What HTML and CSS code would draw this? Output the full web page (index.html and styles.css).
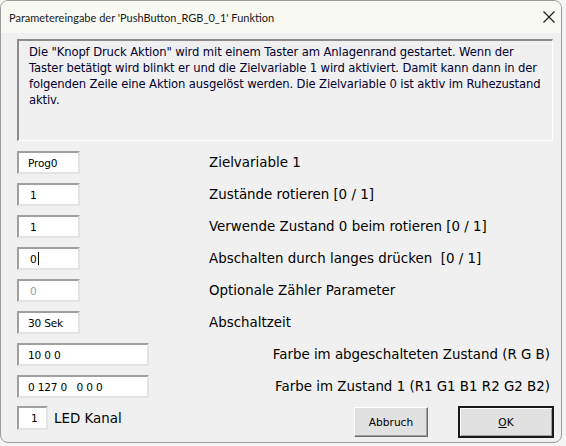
FILE: index.html
```html
<!DOCTYPE html>
<html lang="de">
<head>
<meta charset="utf-8">
<title>Parametereingabe</title>
<link rel="stylesheet" href="styles.css">
</head>
<body>
<div class="window">
  <div class="titlebar">
    <span class="title">Parametereingabe der 'PushButton_RGB_0_1' Funktion</span>
    <svg class="close" width="12" height="12" viewBox="0 0 12 12"><path d="M0.5 0.5 L11.5 11.5 M11.5 0.5 L0.5 11.5" stroke="#1b1b1b" stroke-width="1.1" fill="none"/></svg>
  </div>
  <div class="content">
    <div class="desc">Die "Knopf Druck Aktion" wird mit einem Taster am Anlagenrand gestartet. Wenn der Taster betätigt wird blinkt er und die Zielvariable 1 wird aktiviert. Damit kann dann in der folgenden Zeile eine Aktion ausgelöst werden. Die Zielvariable 0 ist aktiv im Ruhezustand aktiv.</div>
    <div class="rows">
      <div class="row"><div class="field"><span class="val">Prog0</span></div><span class="label">Zielvariable 1</span></div>
      <div class="row"><div class="field"><span class="val v1">1</span></div><span class="label">Zustände rotieren [0 / 1]</span></div>
      <div class="row"><div class="field"><span class="val v1">1</span></div><span class="label">Verwende Zustand 0 beim rotieren [0 / 1]</span></div>
      <div class="row"><div class="field"><span class="val v1">0</span><span class="caret"></span></div><span class="label">Abschalten durch langes drücken&nbsp; [0 / 1]</span></div>
      <div class="row"><div class="field"><span class="val v1 disabled">0</span></div><span class="label">Optionale Zähler Parameter</span></div>
      <div class="row"><div class="field"><span class="val">30 Sek</span></div><span class="label">Abschaltzeit</span></div>
      <div class="row wide"><div class="field"><span class="val">10 0 0</span></div><span class="label right">Farbe im abgeschalteten Zustand (R G B)</span></div>
      <div class="row wide"><div class="field"><span class="val">0 127 0&nbsp;&nbsp; 0 0 0</span></div><span class="label right">Farbe im Zustand 1 (R1 G1 B1 R2 G2 B2)</span></div>
    </div>
    <div class="bottom">
      <div class="led-group">
        <div class="field small"><span class="val v1">1</span></div>
        <span class="led">LED Kanal</span>
      </div>
      <div class="buttons">
        <div class="btn">Abbruch</div>
        <div class="btn default"><span class="ul">O</span>K</div>
      </div>
    </div>
  </div>
</div>
</body>
</html>
```
FILE: styles.css
```css
html, body {
  margin: 0;
  padding: 0;
}
body {
  width: 566px;
  height: 446px;
  background: #f4f4f4;
  overflow: hidden;
}
.window {
  width: 562px;
  height: 443px;
  box-sizing: border-box;
  border: 1px solid #9c9c9c;
  border-radius: 8px;
  background: #f0f0f0;
  overflow: hidden;
  display: flex;
  flex-direction: column;
}
.titlebar {
  height: 32px;
  flex: none;
  background: #f9f9f3;
  display: flex;
  align-items: center;
  justify-content: space-between;
  padding: 0 6px 0 8px;
}
.title {
  font-family: "Lato", sans-serif;
  font-size: 11px;
  color: #1a1a1a;
}
.content {
  padding: 6px 8px 0 16px;
  display: flex;
  flex-direction: column;
}
.desc {
  height: 102px;
  box-sizing: border-box;
  border-top: 2px solid #8c8c8c;
  border-left: 2px solid #8c8c8c;
  border-right: 1px solid #fff;
  border-bottom: 1px solid #fff;
  padding: 3px 10px 0 10px;
  font-family: "DejaVu Sans", sans-serif;
  font-size: 11.6px;
  line-height: 16px;
  letter-spacing: -0.12px;
  color: #000030;
  width: 536px;
}
.rows {
  display: flex;
  flex-direction: column;
  gap: 9px;
  margin-top: 10px;
}
.row {
  display: flex;
  align-items: center;
  height: 23px;
}
.field {
  width: 63px;
  height: 23px;
  box-sizing: border-box;
  background: #fff;
  border-top: 2px solid #a0a0a0;
  border-left: 2px solid #a0a0a0;
  border-right: 2px solid #e3e3e3;
  border-bottom: 2px solid #e3e3e3;
  display: flex;
  align-items: center;
  padding-left: 9px;
  flex: none;
}
.val {
  font-family: "DejaVu Sans", sans-serif;
  font-size: 10.6px;
  color: #000;
  letter-spacing: -0.2px;
}
.v1 {
  margin-left: 2px;
}
.disabled {
  color: #a0a0a0;
}
.caret {
  width: 1px;
  height: 13px;
  background: #000;
  margin-left: 1px;
}
.label {
  font-family: "DejaVu Sans", sans-serif;
  font-size: 13.4px;
  color: #000;
  margin-left: 129px;
}
.row.wide .field {
  width: 132px;
}
.label.right {
  margin-left: auto;
  margin-right: 3px;
}
.bottom {
  display: flex;
  align-items: flex-start;
  margin-top: 8px;
}
.led-group {
  display: flex;
  align-items: center;
}
.field.small {
  width: 31px;
  height: 24px;
  padding-left: 10px;
}
.led {
  font-family: "DejaVu Sans", sans-serif;
  font-size: 13.4px;
  color: #000;
  margin-left: 6px;
}
.buttons {
  margin-left: auto;
  margin-right: -1px;
  display: flex;
  align-items: center;
  gap: 30px;
}
.btn {
  width: 74px;
  height: 30px;
  box-sizing: border-box;
  background: #e1e1e1;
  border-top: 1px solid #fff;
  border-left: 1px solid #fff;
  border-right: 1px solid #696969;
  border-bottom: 1px solid #696969;
  box-shadow: inset -1px -1px 0 #a0a0a0;
  display: flex;
  align-items: center;
  justify-content: center;
  font-family: "DejaVu Sans", sans-serif;
  font-size: 10.6px;
  color: #000;
}
.btn.default {
  width: 96px;
  height: 32px;
  border: 2px solid #1a1a1a;
  box-shadow: inset 1px 1px 0 #fff, inset -1px -1px 0 #a0a0a0;
}
.ul {
  text-decoration: underline;
}
```
